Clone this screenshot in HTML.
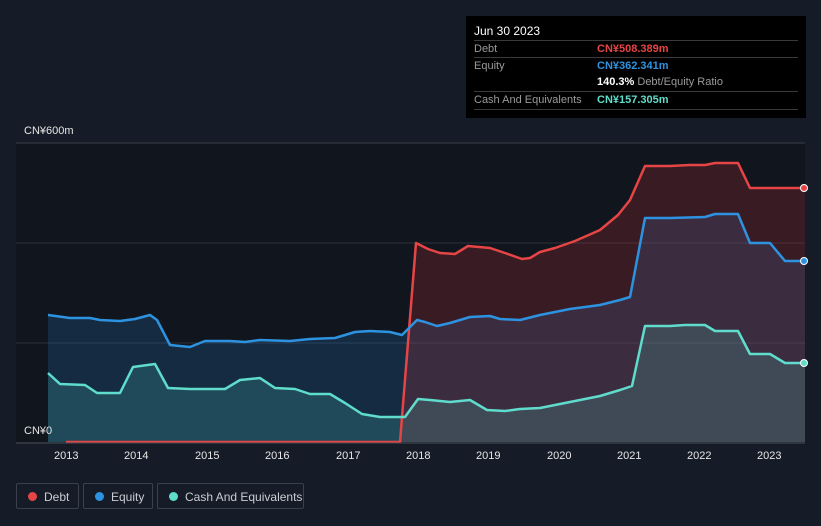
<!DOCTYPE html>
<html><head><meta charset="utf-8"><style>
body{margin:0;background:#161c27;font-family:"Liberation Sans",sans-serif;}
.wrap{position:relative;width:821px;height:526px;overflow:hidden;background:#161c27;}
.tip{position:absolute;left:466px;top:16px;width:340px;height:102px;background:#000;color:#fff;font-size:11px;}
.tip .row{position:absolute;left:8px;width:324px;border-top:1px solid #3a3a3a;height:17px;line-height:17px;}
.lbl{color:#9a9a9a;position:absolute;left:0}
.val{position:absolute;left:123px;font-weight:bold}
.leg{position:absolute;top:483px;height:26px;border:1px solid #3a404c;border-radius:2px;color:#c9ccd2;font-size:12px;line-height:26px;box-sizing:border-box}
.leg i{position:absolute;left:11px;top:8px;width:9px;height:9px;border-radius:50%}
.leg span{position:absolute;left:27px}
.yr{position:absolute;top:450px;color:#e6e6e6;font-size:11px}
</style></head><body><div class="wrap">
<svg width="821" height="526" style="position:absolute;left:0;top:0">
<rect x="16" y="143" width="789" height="299" fill="#11151d"/>
<line x1="16" y1="143" x2="805" y2="143" stroke="#3a3f49"/>
<line x1="16" y1="243" x2="805" y2="243" stroke="#2c313b"/>
<line x1="16" y1="343" x2="805" y2="343" stroke="#2c313b"/>
<path d="M48,315 L70,318 L90,318 L100,320 L120,321 L135,319 L150,315 L157,320 L170,345 L190,347 L205,341 L230,341 L245,342 L260,340 L290,341 L310,339 L335,338 L355,332 L370,331 L390,332 L402,335 L417,320 L425,322 L437,326 L450,323 L470,317 L490,316 L500,319 L520,320 L540,315 L570,309 L600,305 L620,300 L630,297 L645,218 L670,218 L705,217 L715,214 L738,214 L750,243 L770,243 L785,261 L805,261 L805,442 L48,442Z" fill="rgba(30,110,180,0.25)"/>
<path d="M66,442 L400,442 L416,243 L428,249 L440,253 L455,254 L468,246 L490,248 L505,253 L522,259 L530,258 L540,252 L555,248 L575,241 L600,230 L618,215 L630,200 L645,166 L670,166 L690,165 L705,165 L715,163 L738,163 L750,188 L805,188 L805,442 Z" fill="rgba(200,50,60,0.22)"/>
<path d="M48,373 L60,384 L85,385 L97,393 L120,393 L133,367 L155,364 L168,388 L190,389 L225,389 L240,380 L260,378 L275,388 L295,389 L310,394 L330,394 L345,403 L362,414 L380,417 L405,417 L418,399 L430,400 L450,402 L470,400 L487,410 L505,411 L520,409 L540,408 L570,402 L600,396 L620,390 L632,386 L645,326 L670,326 L685,325 L705,325 L715,331 L738,331 L750,354 L770,354 L785,363 L805,363 L805,442 L48,442Z" fill="rgba(90,210,195,0.18)"/>
<path d="M66,442 L400,442 L416,243 L428,249 L440,253 L455,254 L468,246 L490,248 L505,253 L522,259 L530,258 L540,252 L555,248 L575,241 L600,230 L618,215 L630,200 L645,166 L670,166 L690,165 L705,165 L715,163 L738,163 L750,188 L805,188" fill="none" stroke="#e64545" stroke-width="2.5" stroke-linejoin="round"/>
<path d="M48,315 L70,318 L90,318 L100,320 L120,321 L135,319 L150,315 L157,320 L170,345 L190,347 L205,341 L230,341 L245,342 L260,340 L290,341 L310,339 L335,338 L355,332 L370,331 L390,332 L402,335 L417,320 L425,322 L437,326 L450,323 L470,317 L490,316 L500,319 L520,320 L540,315 L570,309 L600,305 L620,300 L630,297 L645,218 L670,218 L705,217 L715,214 L738,214 L750,243 L770,243 L785,261 L805,261" fill="none" stroke="#2d93e0" stroke-width="2.5" stroke-linejoin="round"/>
<path d="M48,373 L60,384 L85,385 L97,393 L120,393 L133,367 L155,364 L168,388 L190,389 L225,389 L240,380 L260,378 L275,388 L295,389 L310,394 L330,394 L345,403 L362,414 L380,417 L405,417 L418,399 L430,400 L450,402 L470,400 L487,410 L505,411 L520,409 L540,408 L570,402 L600,396 L620,390 L632,386 L645,326 L670,326 L685,325 L705,325 L715,331 L738,331 L750,354 L770,354 L785,363 L805,363" fill="none" stroke="#5fdccb" stroke-width="2.5" stroke-linejoin="round"/>
<line x1="16" y1="443" x2="805" y2="443" stroke="#4a4f59"/>
<circle cx="804" cy="188" r="3.5" fill="#e64545" stroke="#fff" stroke-width="1"/>
<circle cx="804" cy="261" r="3.5" fill="#2d93e0" stroke="#fff" stroke-width="1"/>
<circle cx="804" cy="363" r="3.5" fill="#5fdccb" stroke="#fff" stroke-width="1"/>
</svg>
<div style="position:absolute;left:24px;top:125px;color:#e6e6e6;font-size:11px">CN¥600m</div>
<div style="position:absolute;left:24px;top:425px;color:#e6e6e6;font-size:11px">CN¥0</div>
<div class="yr" style="left:54px">2013</div><div class="yr" style="left:124px">2014</div><div class="yr" style="left:195px">2015</div><div class="yr" style="left:265px">2016</div><div class="yr" style="left:336px">2017</div><div class="yr" style="left:406px">2018</div><div class="yr" style="left:476px">2019</div><div class="yr" style="left:547px">2020</div><div class="yr" style="left:617px">2021</div><div class="yr" style="left:687px">2022</div><div class="yr" style="left:757px">2023</div>
<div class="tip">
<div style="position:absolute;left:8px;top:8px;font-size:12px">Jun 30 2023</div>
<div class="row" style="top:24px"><span class="lbl">Debt</span><span class="val" style="color:#e64545">CN¥508.389m</span></div>
<div class="row" style="top:41px"><span class="lbl">Equity</span><span class="val" style="color:#2d93e0">CN¥362.341m</span></div>
<div class="row" style="top:58px;border-top:none"><span class="val">140.3% <span style="color:#9a9a9a;font-weight:normal">Debt/Equity Ratio</span></span></div>
<div class="row" style="top:75px"><span class="lbl">Cash And Equivalents</span><span class="val" style="color:#5fdccb">CN¥157.305m</span></div>
<div class="row" style="top:93px;height:0"></div>
</div>
<div class="leg" style="left:16px;width:63px"><i style="background:#e64545"></i><span>Debt</span></div>
<div class="leg" style="left:83px;width:70px"><i style="background:#2d93e0"></i><span>Equity</span></div>
<div class="leg" style="left:157px;width:147px"><i style="background:#5fdccb"></i><span>Cash And Equivalents</span></div>
</div></body></html>
